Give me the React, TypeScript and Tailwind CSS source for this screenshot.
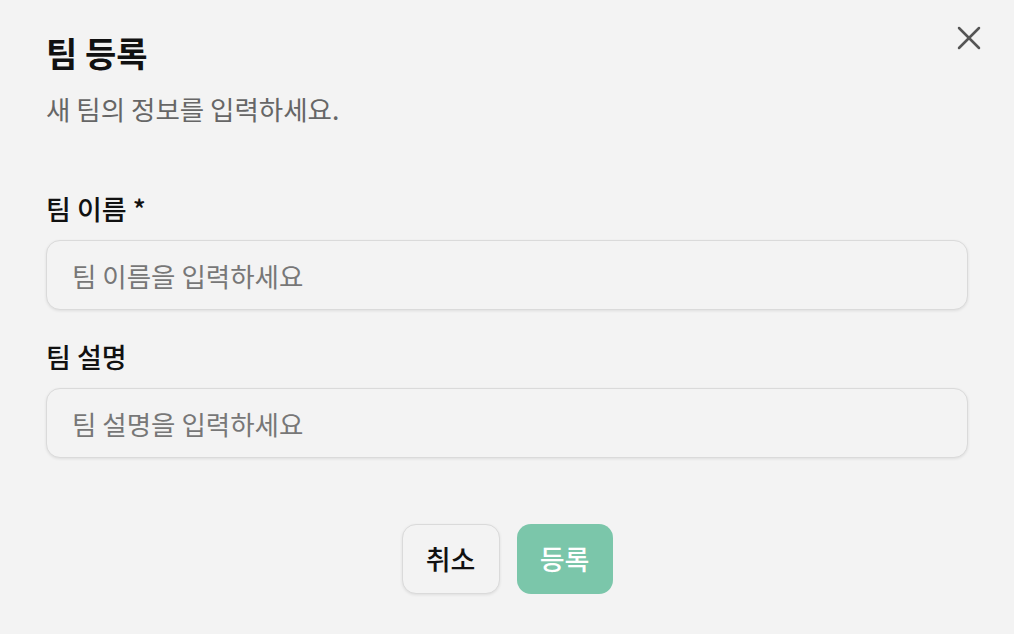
import { X } from 'lucide-react';

const font = { fontFamily: '"Noto Sans CJK KR", "Noto Sans", sans-serif' };

function Field({ label, placeholder }: { label: string; placeholder: string }) {
  return (
    <div className="flex flex-col">
      <label className="text-[27px] leading-[36px] font-medium text-[#111]">{label}</label>
      <input
        placeholder={placeholder}
        className="mt-[13px] h-[70px] w-full rounded-[14px] border-[1.5px] border-[#dadada] bg-[#f3f3f3] px-[25px] text-[26.5px] text-[#222] shadow-[0_1px_3px_rgba(0,0,0,0.09)] outline-none placeholder:text-[#777]"
      />
    </div>
  );
}

export default function App() {
  return (
    <div style={font} className="relative h-[634px] w-[1014px] overflow-hidden bg-[#f3f3f3]">
      <button className="absolute right-[25px] top-[18px] text-[#555]">
        <X className="h-[40px] w-[40px]" strokeWidth={1.5} />
      </button>

      <div className="flex flex-col px-[46px] pt-[33px]">
        <h2 className="text-[34px] leading-[40px] font-bold text-[#111]">팀 등록</h2>
        <p className="mt-[18px] text-[26.5px] leading-[36px] text-[#666]">새 팀의 정보를 입력하세요.</p>

        <div className="mt-[64px] flex flex-col gap-[29px]">
          <Field label="팀 이름 *" placeholder="팀 이름을 입력하세요" />
          <Field label="팀 설명" placeholder="팀 설명을 입력하세요" />
        </div>

        <div className="mt-[66px] flex justify-center gap-[17px]">
          <button className="h-[70px] w-[98px] rounded-[14px] border-[1.5px] border-[#dadada] bg-[#f3f3f3] text-[27px] font-medium text-[#111] shadow-[0_1px_3px_rgba(0,0,0,0.09)]">
            취소
          </button>
          <button className="h-[70px] w-[96px] rounded-[14px] bg-[#7bc6aa] text-[27px] font-medium text-white">
            등록
          </button>
        </div>
      </div>
    </div>
  );
}
